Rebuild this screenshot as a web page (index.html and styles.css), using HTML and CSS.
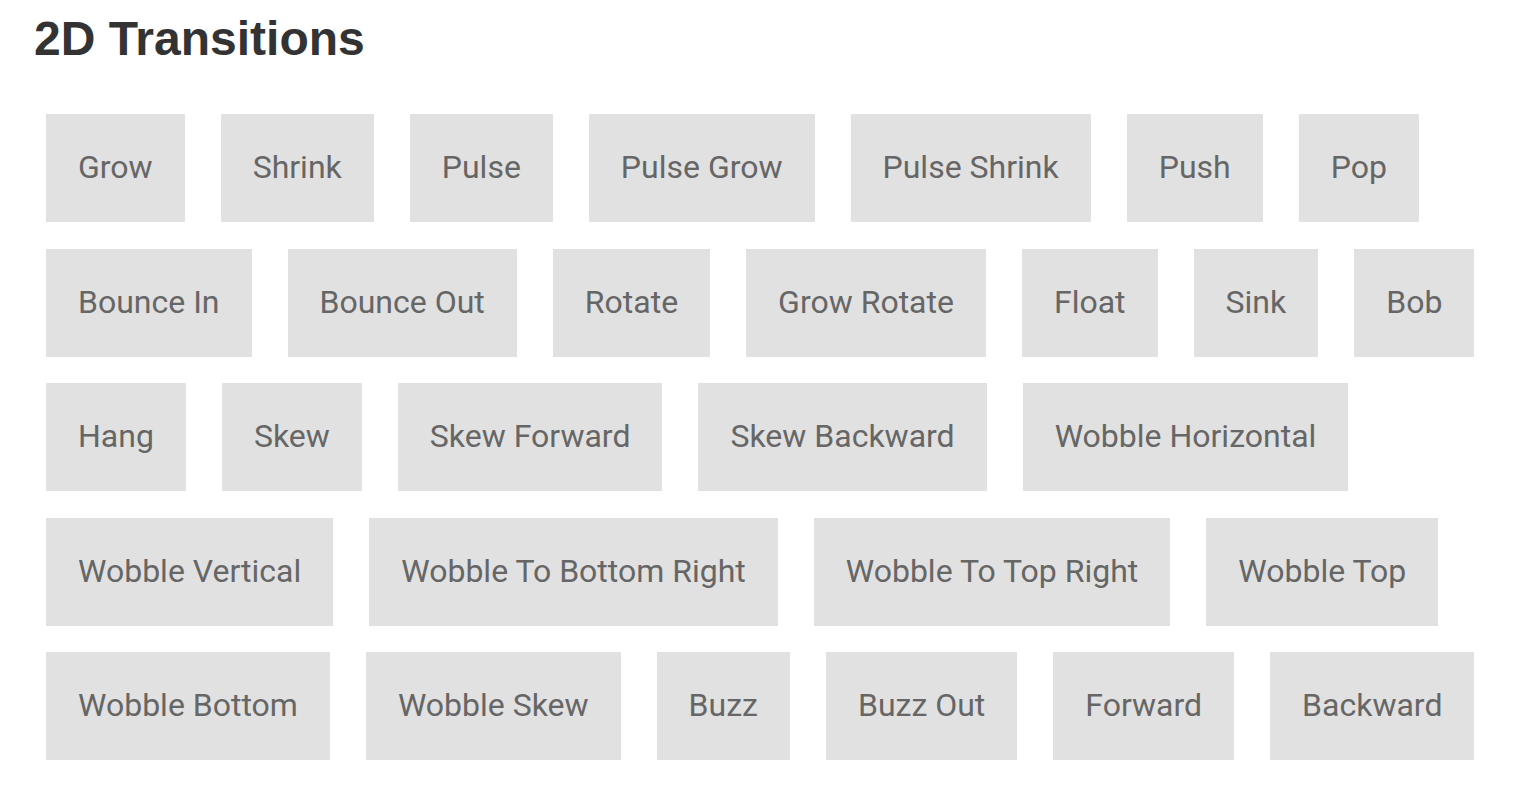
FILE: index.html
```html
<!DOCTYPE html>
<html lang="en">
<head>
<meta charset="utf-8">
<title>2D Transitions</title>
<link rel="stylesheet" href="styles.css">
</head>
<body>
<main class="page">
  <h1 class="title">2D Transitions</h1>
  <div class="buttons">
    <a class="button">Grow</a>
    <a class="button">Shrink</a>
    <a class="button">Pulse</a>
    <a class="button">Pulse Grow</a>
    <a class="button">Pulse Shrink</a>
    <a class="button">Push</a>
    <a class="button">Pop</a>
    <a class="button">Bounce In</a>
    <a class="button">Bounce Out</a>
    <a class="button">Rotate</a>
    <a class="button">Grow Rotate</a>
    <a class="button">Float</a>
    <a class="button">Sink</a>
    <a class="button">Bob</a>
    <a class="button">Hang</a>
    <a class="button">Skew</a>
    <a class="button">Skew Forward</a>
    <a class="button">Skew Backward</a>
    <a class="button">Wobble Horizontal</a>
    <a class="button">Wobble Vertical</a>
    <a class="button">Wobble To Bottom Right</a>
    <a class="button">Wobble To Top Right</a>
    <a class="button">Wobble Top</a>
    <a class="button">Wobble Bottom</a>
    <a class="button">Wobble Skew</a>
    <a class="button">Buzz</a>
    <a class="button">Buzz Out</a>
    <a class="button">Forward</a>
    <a class="button">Backward</a>
  </div>
</main>
</body>
</html>
```

FILE: styles.css
```css
html, body {
  margin: 0;
  padding: 0;
  background: #ffffff;
}

.page {
  padding: 11px 0 0 34px;
}

.title {
  margin: 0;
  font-family: "Liberation Sans", Arial, sans-serif;
  font-weight: 700;
  font-size: 48px;
  line-height: 56px;
  color: #333333;
}

.buttons {
  display: flex;
  flex-wrap: wrap;
  column-gap: 36px;
  row-gap: 26.5px;
  margin-top: 47px;
  padding-left: 12px;
}

.button {
  display: block;
  padding: 31px 32px 33px;
  background: #e1e1e1;
  color: #666666;
  font-family: Roboto, "Noto Sans", sans-serif;
  font-size: 32px;
  line-height: 44px;
  white-space: nowrap;
  text-decoration: none;
  cursor: pointer;
}
```
